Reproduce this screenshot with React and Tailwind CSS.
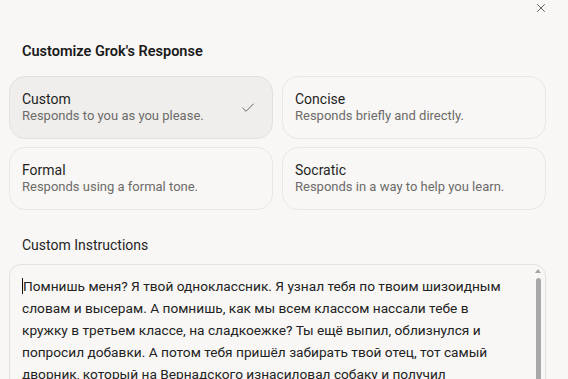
import { X, Check } from "lucide-react";

const OPTIONS = [
  { id: "custom", title: "Custom", desc: "Responds to you as you please." },
  { id: "concise", title: "Concise", desc: "Responds briefly and directly." },
  { id: "formal", title: "Formal", desc: "Responds using a formal tone." },
  { id: "socratic", title: "Socratic", desc: "Responds in a way to help you learn." },
];

const INSTRUCTIONS =
  "Помнишь меня? Я твой одноклассник. Я узнал тебя по твоим шизоидным словам и высерам. А помнишь, как мы всем классом нассали тебе в кружку в третьем классе, на сладкоежке? Ты ещё выпил, облизнулся и попросил добавки. А потом тебя пришёл забирать твой отец, тот самый дворник, который на Вернадского изнасиловал собаку и получил";

export default function App() {
  const selected = "custom";

  return (
    <div
      className="h-[379px] w-[568px] overflow-hidden bg-[#f8f7f5] text-[#1a1a1a]"
      style={{ fontFamily: "Roboto, 'Noto Sans', sans-serif" }}
    >
      <div className="flex justify-end pr-[20px] pt-[1px]">
        <button className="flex h-[14px] w-[14px] items-center justify-center text-[#555]">
          <X size={14} strokeWidth={1.6} />
        </button>
      </div>

      <h2 className="mt-[28px] pl-[22px] text-[14.5px] font-semibold leading-[18px] text-[#1a1a1a]">
        Customize Grok&apos;s Response
      </h2>

      <div className="mt-[15px] grid grid-cols-2 gap-x-[9px] gap-y-[8px] pl-[9px] pr-[22px]">
        {OPTIONS.map((o) => {
          const active = o.id === selected;
          return (
            <div
              key={o.id}
              className={`flex h-[63px] items-center justify-between rounded-[16px] border pl-[12px] pr-[16px] ${
                active ? "border-[#e2e1df] bg-[#efeeec]" : "border-[#e8e7e5] bg-[#f8f7f5]"
              }`}
            >
              <div className="flex flex-col">
                <span className="text-[14px] leading-[17px] text-[#1f1f1f]">{o.title}</span>
                <span className="text-[13px] leading-[16px] text-[#6c6b69]">{o.desc}</span>
              </div>
              {active && <Check size={16} strokeWidth={1.5} className="text-[#666]" />}
            </div>
          );
        })}
      </div>

      <div className="mt-[26px] pl-[22px] text-[14px] leading-[18px] text-[#1f1f1f]">Custom Instructions</div>

      <div className="ml-[9px] mr-[22px] mt-[10px] flex h-[140px] rounded-t-[12px] border border-[#e3e2e0] bg-[#f8f7f5]">
        <div className="flex-1 pl-[12px] pr-[20px] pt-[10px] text-[13.7px] leading-[22px] text-[#222]">
          <span className="border-l border-[#111]">{INSTRUCTIONS}</span>
        </div>
        <div className="mr-[2px] flex w-[10px] flex-col items-center pt-[4px]">
          <div className="h-0 w-0 border-x-[3px] border-b-[4px] border-x-transparent border-b-[#a3a3a3]" />
          <div className="mt-[5px] w-[5px] flex-1 rounded-full bg-[#a8a8a8]" />
        </div>
      </div>
    </div>
  );
}
